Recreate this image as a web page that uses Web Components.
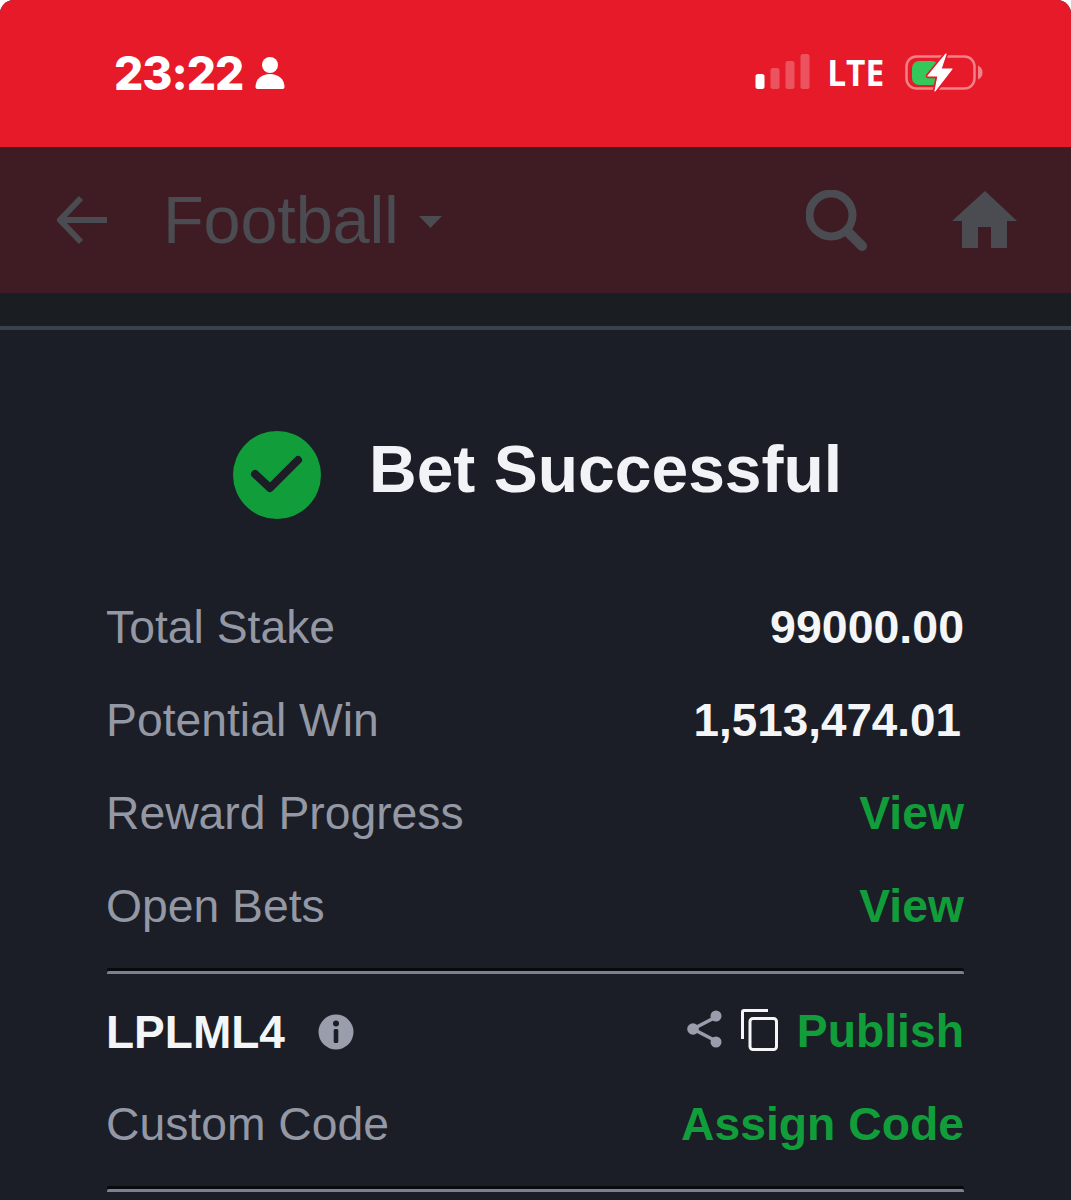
<!DOCTYPE html>
<html><head><meta charset="utf-8">
<style>
html,body{margin:0;padding:0;background:#fff;}
body{width:1071px;height:1200px;overflow:hidden;font-family:"Liberation Sans",Arial,sans-serif;}
</style></head>
<body>
<bet-page>
  <status-bar slot="status" time="23:22"></status-bar>
  <app-bar slot="appbar" title="Football"></app-bar>
  <bet-title>Bet Successful</bet-title>
  <bet-row><span>Total Stake</span><b slot="value" class="v">99000.00</b></bet-row>
  <bet-row><span>Potential Win</span><b slot="value" class="v w">1,513,474.01</b></bet-row>
  <bet-row><span>Reward Progress</span><b slot="value" class="g">View</b></bet-row>
  <bet-row><span>Open Bets</span><b slot="value" class="g">View</b></bet-row>
  <bet-rule></bet-rule>
  <code-row code="LPLML4"></code-row>
  <bet-row><span>Custom Code</span><b slot="value" class="g">Assign Code</b></bet-row>
  <bet-rule></bet-rule>
</bet-page>
<script>
class BetPage extends HTMLElement{constructor(){super();this.attachShadow({mode:'open'}).innerHTML=`
<style>
:host{display:flex;flex-direction:column;width:1071px;height:1200px;background:#1b1e26;overflow:hidden;border-radius:14px 14px 0 0;}
.strip{height:33px;background:#1a1d22;flex:none}
.line{height:4px;background:#3a414c;flex:none}
.main{flex:1;display:flex;flex-direction:column;padding:0 107px 0 106px;color:#fff}
</style>
<slot name="status"></slot><slot name="appbar"></slot>
<div class="strip"></div><div class="line"></div>
<div class="main"><slot></slot></div>`}}
customElements.define('bet-page',BetPage);

class StatusBar extends HTMLElement{constructor(){super();const t=this.getAttribute('time');this.attachShadow({mode:'open'}).innerHTML=`
<style>
:host{display:flex;align-items:center;height:147px;background:#e61a29;color:#fff;padding:0 88px 0 114px;box-sizing:border-box;justify-content:space-between;flex:none}
.l,.r{display:flex;align-items:center;margin-top:-2px}
.time{font:800 46px/1 Inter,"Liberation Sans",sans-serif;letter-spacing:-1px}
.lte{font:700 36px/1 "Open Sans","Noto Sans",sans-serif;margin:0 18.500px 0 15.500px;transform:scaleX(.93);letter-spacing:0}
svg{display:block}
</style>
<div class="l"><span class="time">${t}</span>
<svg width="30" height="34" viewBox="0 0 30 34" style="margin-left:12px"><circle cx="15" cy="9" r="8" fill="#fff"/><path d="M0.500 31 C0.500 23 7 18 15 18 S29.500 23 29.500 31 C29.500 32.500 28.500 33 27 33 H3 C1.500 33 .5 32.500 .5 31Z" fill="#fff"/></svg></div>
<div class="r">
<svg width="55" height="36" viewBox="0 0 55 36" style="margin-top:-3px"><rect x="0.500" y="21" width="9" height="15" rx="2.500" fill="#fff"/><rect x="15.500" y="15" width="9" height="21" rx="2.500" fill="#fff" fill-opacity=".25"/><rect x="30.500" y="8" width="9" height="28" rx="2.500" fill="#fff" fill-opacity=".25"/><rect x="45.500" y="1" width="9" height="35" rx="2.500" fill="#fff" fill-opacity=".25"/></svg>
<span class="lte">LTE</span>
<svg width="78" height="40" viewBox="0 0 78 40"><rect x="1.500" y="3.500" width="68" height="32" rx="10" fill="none" stroke="#fff" stroke-opacity=".45" stroke-width="2.500"/><path d="M73 12.500 C76.500 14 77.500 17 77.500 19.500 S76.500 25 73 26.500Z" fill="#fff" fill-opacity=".45"/><rect x="7" y="8" width="27" height="24" rx="7" fill="#34c759"/><path d="M41 1 L23 23 H33 L30 38 L47 16 H36 Z" fill="#e61a29" stroke="#e61a29" stroke-width="4.500" stroke-linejoin="round"/><path d="M41 1 L23 23 H33 L30 38 L47 16 H36 Z" fill="#fff" stroke="#fff" stroke-width="1.200" stroke-linejoin="round"/></svg>
</div>`}}
customElements.define('status-bar',StatusBar);

class AppBar extends HTMLElement{constructor(){super();const t=this.getAttribute('title');this.attachShadow({mode:'open'}).innerHTML=`
<style>
:host{display:flex;align-items:center;height:146px;background:#3f1c23;color:#4a4c52;padding:0 53px 0 57px;box-sizing:border-box;flex:none}
.t{font:400 66.700px/1 "Liberation Sans",Arial,sans-serif;margin-left:56px;letter-spacing:-.2px}
.sp{flex:1}
svg{display:block}
</style>
<svg width="50" height="50" viewBox="0 0 50 50"><path d="M24 3 L3 25 L24 47 M3 25 H50" fill="none" stroke="#4a4c52" stroke-width="6"/></svg>
<span class="t">Football</span>
<svg width="24" height="14" viewBox="0 0 24 14" style="margin:3px 0 0 20px"><path d="M0 1 H23 L11.500 13Z" fill="#4a4c52"/></svg>
<span class="sp"></span>
<svg width="62" height="62" viewBox="0 0 62 62" style="margin-top:2px"><circle cx="25" cy="25" r="21.500" fill="none" stroke="#4a4c52" stroke-width="8"/><path d="M41 41 L56 56" stroke="#4a4c52" stroke-width="10" stroke-linecap="round"/></svg>
<svg width="66" height="58" viewBox="0 0 66 58" style="margin:0 0 0 84px"><path d="M33 0 L65 30 H55 V57 H39 V36 H26 V57 H10 V30 H0Z" fill="#4a4c52"/></svg>`}}
customElements.define('app-bar',AppBar);

class BetTitle extends HTMLElement{constructor(){super();this.attachShadow({mode:'open'}).innerHTML=`
<style>
:host{display:flex;align-items:center;box-sizing:border-box;height:251px;flex:none;padding:39px 0 0 127px;color:#f2f3f6;font:700 66px/1 "Liberation Sans",Arial,sans-serif}
svg{display:block;margin-right:48px;flex:none}
span{margin-top:-12px}
</style>
<svg width="88" height="88" viewBox="0 0 88 88"><circle cx="44" cy="44" r="44" fill="#109d3a"/><path d="M22 43 L37 57 L65 29" fill="none" stroke="#1b1e26" stroke-width="8" stroke-linecap="round" stroke-linejoin="round"/></svg>
<span><slot></slot></span>`}}
customElements.define('bet-title',BetTitle);

const rowCss=`:host{display:flex;align-items:center;justify-content:space-between;height:93px;flex:none;font:400 46.300px/1 "Liberation Sans",Arial,sans-serif;color:#9498a5}`;
class BetRow extends HTMLElement{constructor(){super();this.attachShadow({mode:'open'}).innerHTML=`
<style>${rowCss}
::slotted(.v){font:700 46.500px/1 "Liberation Sans",Arial,sans-serif;color:#f4f5f7}
::slotted(.w){font-size:45.800px;margin-right:3px}
::slotted(.g){font:700 46.300px/1 "Liberation Sans",Arial,sans-serif;color:#109d3a}
</style><slot></slot><slot name="value"></slot>`}}
customElements.define('bet-row',BetRow);

class BetRule extends HTMLElement{constructor(){super();this.attachShadow({mode:'open'}).innerHTML=`
<style>:host{display:block;padding:14.500px 0 11.500px 1px;flex:none}
div{height:3px;background:#000a;border-radius:2px 2px 0 0}
i{display:block;height:3px;background:#7b8192;border-radius:2px 2px 0 0}</style><div></div><i></i>`}}
customElements.define('bet-rule',BetRule);

class CodeRow extends HTMLElement{constructor(){super();const c=this.getAttribute('code');this.attachShadow({mode:'open'}).innerHTML=`
<style>${rowCss}
.l,.r{display:flex;align-items:center}
b{font:700 46px/1 "Liberation Sans",Arial,sans-serif;color:#f4f5f7}
.p{color:#109d3a;font-size:46.300px;margin-left:19px}
svg{display:block}
</style>
<div class="l"><b>${c}</b><svg width="36" height="36" viewBox="0 0 36 36" style="margin-left:33px"><circle cx="18" cy="18" r="17.500" fill="#9a9dab"/><circle cx="18" cy="9.500" r="3" fill="#1b1e26"/><rect x="15.700" y="15" width="4.600" height="14" rx="1.500" fill="#1b1e26"/></svg></div>
<div class="r">
<svg width="35" height="38" viewBox="0 0 35 38" style="margin-top:-5px"><path d="M29 7 L6 19 L29 31" fill="none" stroke="#9a9dab" stroke-width="3.500"/><circle cx="29" cy="6" r="5.500" fill="#9a9dab"/><circle cx="6" cy="19" r="5.800" fill="#9a9dab"/><circle cx="29" cy="32" r="5.500" fill="#9a9dab"/></svg>
<svg width="37" height="42" viewBox="0 0 37 42" style="margin:-3px 0 0 19px"><path d="M27 1.500 H3 Q1.500 1.500 1.500 3 V30" fill="none" stroke="#f4f5f7" stroke-width="3"/><rect x="9" y="9.500" width="26.500" height="31" rx="3" fill="none" stroke="#f4f5f7" stroke-width="3"/></svg>
<b class="p">Publish</b></div>`}}
customElements.define('code-row',CodeRow);
</script>
</body></html>
